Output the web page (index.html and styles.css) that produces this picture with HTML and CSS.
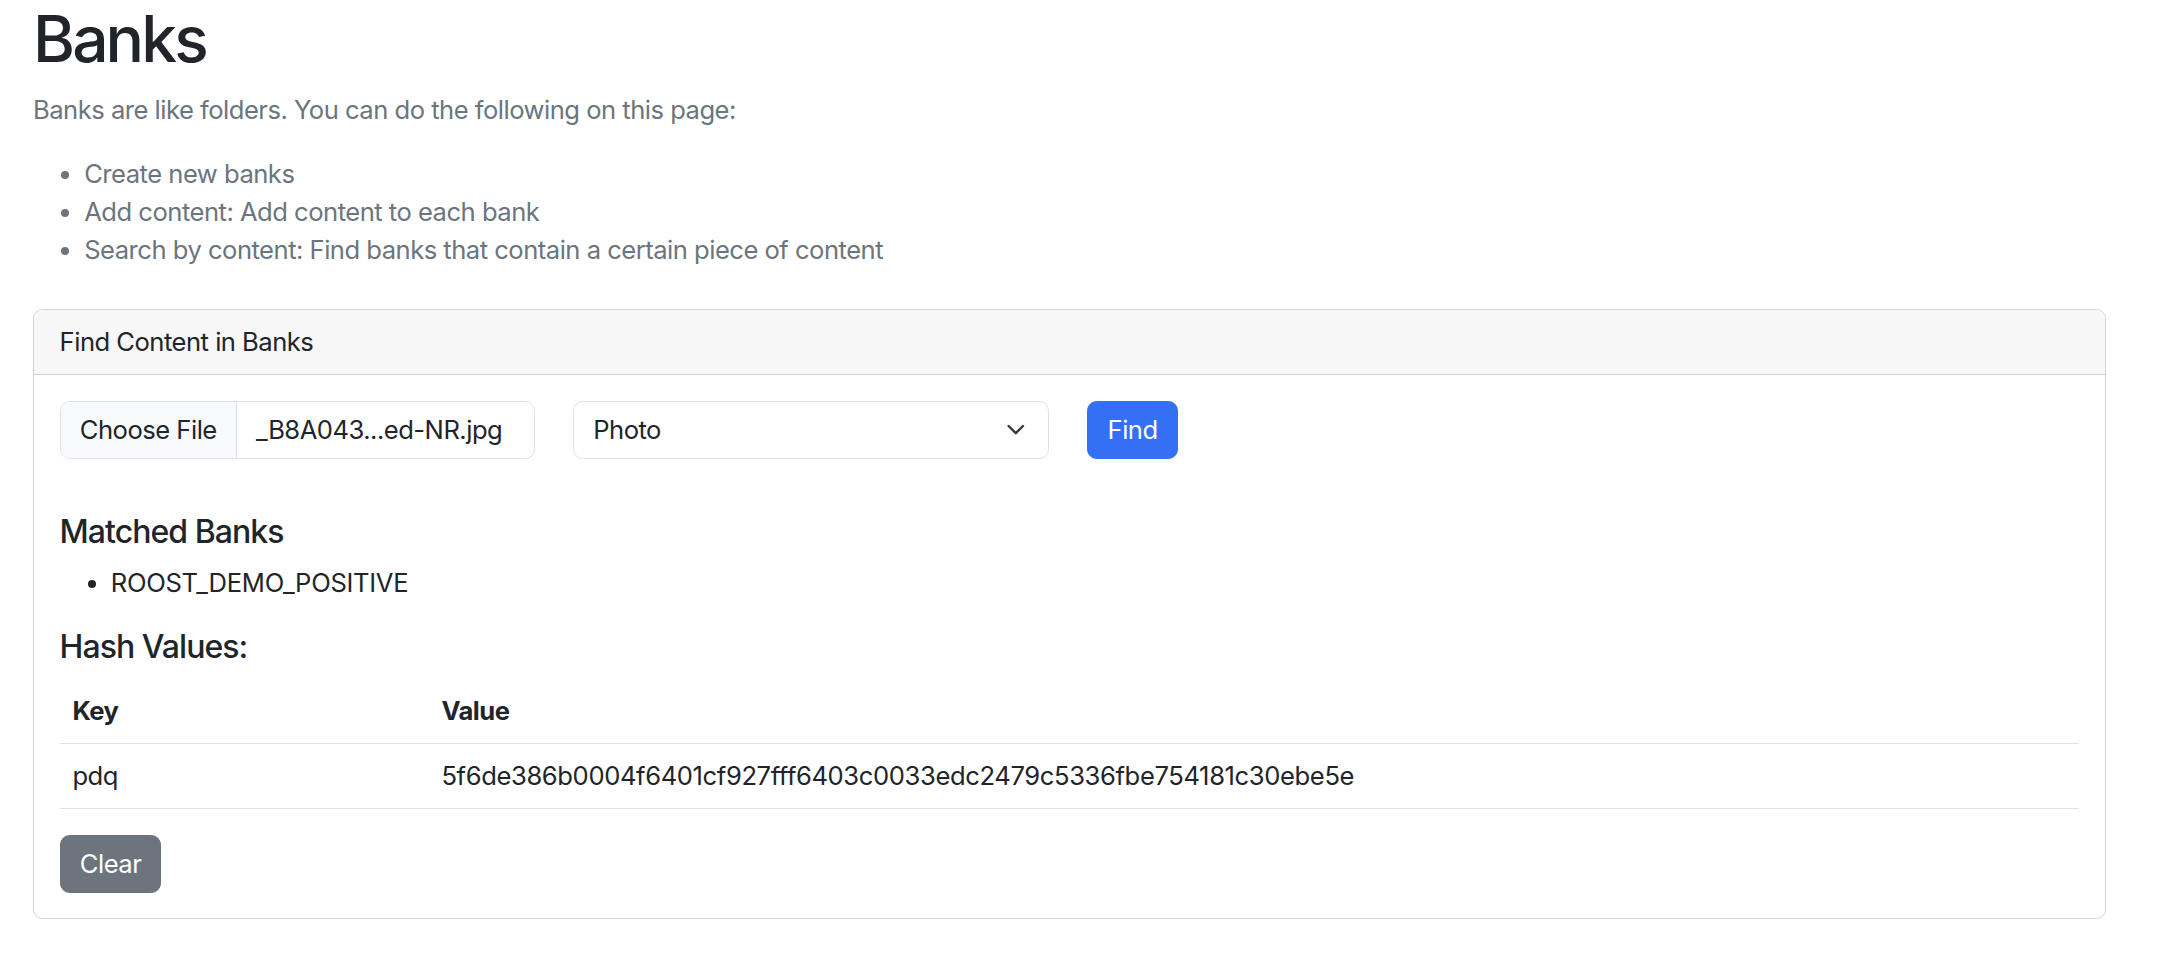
FILE: index.html
```html
<!DOCTYPE html>
<html lang="en">
<head>
<meta charset="utf-8">
<title>Banks</title>
<link rel="stylesheet" href="styles.css">
</head>
<body>
<main class="page">
  <h1 class="title">Banks</h1>
  <p class="intro">Banks are like folders. You can do the following on this page:</p>
  <ul class="intro-list">
    <li>Create new banks</li>
    <li>Add content: Add content to each bank</li>
    <li>Search by content: Find banks that contain a certain piece of content</li>
  </ul>

  <section class="card">
    <div class="card-header">Find Content in Banks</div>
    <div class="card-body">
      <form class="search-row">
        <div class="file-input">
          <span class="file-btn">Choose File</span>
          <span class="file-name">_B8A043...ed-NR.jpg</span>
        </div>
        <div class="select">
          <span>Photo</span>
          <svg class="chevron" viewBox="0 0 16 16" width="25.6" height="19.2" preserveAspectRatio="xMidYMid meet"><path fill="none" stroke="#343a40" stroke-linecap="round" stroke-linejoin="round" stroke-width="2" d="m2 5 6 6 6-6"/></svg>
        </div>
        <button type="button" class="btn btn-primary">Find</button>
      </form>

      <h5 class="subhead">Matched Banks</h5>
      <ul class="match-list">
        <li>ROOST_DEMO_POSITIVE</li>
      </ul>

      <h5 class="subhead">Hash Values:</h5>
      <table class="hash-table">
        <colgroup><col class="col-key"><col></colgroup>
        <thead>
          <tr><th>Key</th><th>Value</th></tr>
        </thead>
        <tbody>
          <tr><td>pdq</td><td class="hash">5f6de386b0004f6401cf927fff6403c0033edc2479c5336fbe754181c30ebe5e</td></tr>
        </tbody>
      </table>

      <button type="button" class="btn btn-secondary">Clear</button>
    </div>
  </section>
</main>
</body>
</html>
```

FILE: styles.css
```css
* { box-sizing: border-box; }

html, body {
  margin: 0;
  background: #ffffff;
}

body {
  font-family: Inter, "Noto Sans", "Liberation Sans", sans-serif;
  font-size: 25.6px;
  line-height: 1.5;
  letter-spacing: -0.02em;
  color: #212529;
}

.page {
  padding: 1px 52px 0 33px;
}

.title {
  margin: 0 0 12.8px;
  font-size: 64px;
  font-weight: 500;
  line-height: 1.2;
  letter-spacing: -0.045em;
  color: #212529;
}

.intro {
  margin: 0 0 25.6px;
  color: #6c757d;
}

.intro-list {
  margin: 0 0 25.6px;
  padding-left: 51.2px;
  color: #6c757d;
}

.card {
  margin-top: 39.6px;
  border: 1px solid #d3d3d4;
  border-radius: 9.6px;
  overflow: hidden;
}

.card-header {
  padding: 12.8px 25.6px;
  background: #f7f7f7;
  border-bottom: 1px solid #d3d3d4;
}

.card-body {
  padding: 25.6px;
}

.search-row {
  display: flex;
  align-items: center;
  gap: 38.4px;
  margin: 0 0 54px;
}

.file-input {
  display: flex;
  width: 475px;
  height: 58px;
  border: 1px solid #dee2e6;
  border-radius: 9.6px;
  overflow: hidden;
}

.file-btn {
  display: flex;
  align-items: center;
  padding: 0 19.2px;
  background: #f8f9fa;
  border-right: 1px solid #dee2e6;
  white-space: nowrap;
}

.file-name {
  display: flex;
  align-items: center;
  padding: 0 19.2px;
  white-space: nowrap;
}

.select {
  display: flex;
  align-items: center;
  justify-content: space-between;
  width: 476px;
  height: 58px;
  padding: 0 19.2px;
  border: 1px solid #dee2e6;
  border-radius: 9.6px;
}

.chevron {
  display: block;
}

.btn {
  height: 58px;
  padding: 0 19.2px;
  border: 1px solid transparent;
  border-radius: 9.6px;
  font-family: inherit;
  font-size: 25.6px;
  line-height: 1.5;
  letter-spacing: -0.02em;
  color: #ffffff;
  cursor: pointer;
}

.btn-primary {
  background: #3370f6;
  border-color: #3370f6;
}

.btn-secondary {
  background: #6c757d;
  border-color: #6c757d;
}

.subhead {
  margin: 0 0 12.8px;
  font-size: 32px;
  font-weight: 500;
  line-height: 1.2;
  letter-spacing: -0.03em;
}

.match-list {
  margin: 0 0 25.6px;
  padding-left: 51.2px;
  letter-spacing: -0.012em;
}

.hash-table {
  width: 100%;
  table-layout: fixed;
  border-collapse: collapse;
  margin-bottom: 25.6px;
}

.col-key {
  width: 369px;
}

.hash-table th,
.hash-table td {
  padding: 12.8px;
  text-align: left;
  border-bottom: 1px solid #dee2e6;
}

.hash-table th {
  font-weight: 700;
}

.hash-table .hash {
  letter-spacing: -0.015em;
}
```
